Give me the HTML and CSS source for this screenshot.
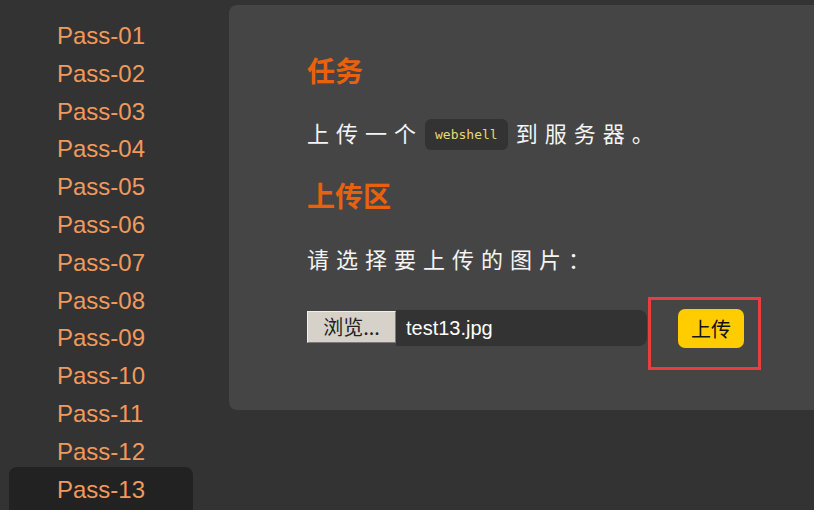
FILE: index.html
```html
<!DOCTYPE html>
<html lang="zh-CN">
 <head>
  <meta charset="UTF-8" />
  <meta name="viewport" content="width=device-width, initial-scale=1.0" />
  <title>Pass-13</title>
  <link rel="stylesheet" href="styles.css">
 </head>
 <body>
  <!-- sidebar -->
  <ul class="menu">
   <li>Pass-01</li>
   <li>Pass-02</li>
   <li>Pass-03</li>
   <li>Pass-04</li>
   <li>Pass-05</li>
   <li>Pass-06</li>
   <li>Pass-07</li>
   <li>Pass-08</li>
   <li>Pass-09</li>
   <li>Pass-10</li>
   <li>Pass-11</li>
   <li>Pass-12</li>
   <li class="active">Pass-13</li>
  </ul>
  <!-- main panel -->
  <div class="panel">
   <h2 class="title">任务</h2>
   <p class="text">上传一个<code>webshell</code>到服务器。</p>
   <h2 class="title second">上传区</h2>
   <p class="text">请选择要上传的图片：</p>
   <div class="upload-row">
    <span class="file-btn">浏览...</span>
    <span class="file-name">test13.jpg</span>
    <div class="mark">
     <button class="submit">上传</button>
    </div>
   </div>
  </div>
 </body>
</html>
```

FILE: styles.css
```css
body {
 margin: 0;
 display: flex;
 background-color: #333333;
 height: 510px;
 overflow: hidden;
 font-family: "Liberation Sans", "Noto Sans CJK SC", sans-serif;
}
.menu {
 list-style: none;
 margin: 17px 0 0 9px;
 padding: 0;
 width: 184px;
 flex-shrink: 0;
}
.menu li {
 height: 37.8px;
 line-height: 37.8px;
 padding-left: 48px;
 font-size: 24px;
 color: #f2995c;
}
.menu li.active {
 background-color: #222222;
 border-radius: 8px;
 margin-top: -4px;
 padding-top: 4px;
 height: 48px;
}
.panel {
 margin: 5px 0 0 36px;
 width: 620px;
 height: 405px;
 flex-shrink: 0;
 background-color: #454545;
 border-radius: 8px;
 padding: 47px 0 0 78px;
 box-sizing: border-box;
 font-family: "Noto Sans CJK SC", sans-serif;
}
.title {
 margin: 0;
 font-size: 28px;
 line-height: 36px;
 font-weight: bold;
 color: #e8620e;
}
.text {
 margin: 26px 0 0;
 font-size: 22px;
 line-height: 36px;
 letter-spacing: 7px;
 color: #f4f4f4;
}
.text + .title {
 margin-top: 27px;
}
.title.second + .text {
 margin-top: 27px;
}
code {
 display: inline-block;
 vertical-align: middle;
 margin: -4px 8px 0 2px;
 padding: 0 10px;
 height: 31px;
 line-height: 31px;
 background-color: #333333;
 border-radius: 6px;
 font-family: "DejaVu Sans Mono", monospace;
 font-size: 13px;
 letter-spacing: 0;
 color: #e6db74;
}
.upload-row {
 display: flex;
 align-items: flex-start;
 margin-top: 21px;
}
.file-btn {
 margin-top: 14px;
 width: 89px;
 height: 32px;
 box-sizing: border-box;
 background-color: #d6d2ca;
 border: 1px solid;
 border-color: #f2f0ec #7a7a7a #7a7a7a #f2f0ec;
 font-size: 20px;
 line-height: 29px;
 text-align: center;
 color: #222222;
}
.file-name {
 margin-top: 13px;
 width: 251px;
 height: 36px;
 padding-left: 10px;
 box-sizing: border-box;
 background-color: #333333;
 border-radius: 0 8px 8px 0;
 font-family: "Liberation Sans", sans-serif;
 font-size: 20px;
 line-height: 36px;
 color: #ffffff;
}
.mark {
 margin-left: 1px;
 width: 113px;
 height: 73px;
 box-sizing: border-box;
 border: 3px solid #e83e3e;
 padding: 9px 0 0 27px;
}
.submit {
 width: 66px;
 height: 39px;
 border: none;
 border-radius: 7px;
 background-color: #ffcc00;
 font-family: "Noto Sans CJK SC", sans-serif;
 font-size: 20px;
 color: #111111;
 padding: 0;
}
```
